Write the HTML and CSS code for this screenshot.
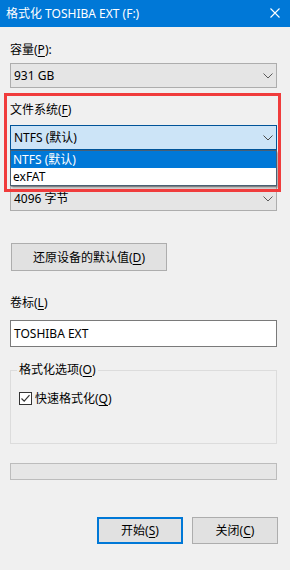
FILE: index.html
```html
<!DOCTYPE html>
<html lang="zh-CN">
<head>
<meta charset="utf-8">
<title>格式化 TOSHIBA EXT (F:)</title>
<link rel="stylesheet" href="styles.css">
</head>
<body>
<div class="window">
  <div class="titlebar">
    <span class="title">格式化 TOSHIBA EXT (F:)</span>
    <svg class="close" width="10" height="10" viewBox="0 0 10 10"><path d="M0.5 0.5 L9.5 9.5 M9.5 0.5 L0.5 9.5" stroke="#fff" stroke-width="1.1" fill="none"/></svg>
  </div>
  <div class="content">
    <div class="label l1">容量(<u>P</u>):</div>
    <div class="combo c1"><span>931 GB</span><svg class="chev" width="10" height="6" viewBox="0 0 10 6"><path d="M0.5 0.5 L5 5 L9.5 0.5" stroke="#5a5a5a" stroke-width="1" fill="none"/></svg></div>

    <div class="label l2">文件系统(<u>F</u>)</div>
    <div class="combo-wrap">
      <div class="combo c2 focused"><span>NTFS (默认)</span><svg class="chev" width="10" height="6" viewBox="0 0 10 6"><path d="M0.5 0.5 L5 5 L9.5 0.5" stroke="#4a4a4a" stroke-width="1" fill="none"/></svg></div>
      <ul class="droplist">
        <li class="sel">NTFS (默认)</li>
        <li>exFAT</li>
      </ul>
    </div>

    <div class="label l3"></div>
    <div class="combo c3"><span>4096 字节</span><svg class="chev" width="10" height="6" viewBox="0 0 10 6"><path d="M0.5 0.5 L5 5 L9.5 0.5" stroke="#5a5a5a" stroke-width="1" fill="none"/></svg></div>

    <div class="btn restore">还原设备的默认值(<u>D</u>)</div>

    <div class="label l4">卷标(<u>L</u>)</div>
    <div class="textbox">TOSHIBA EXT</div>

    <fieldset class="group">
      <legend>格式化选项(<u>O</u>)</legend>
      <div class="check-row">
        <span class="checkbox"><svg width="11" height="11" viewBox="0 0 11 11"><path d="M1.5 5.5 L4.2 8.2 L9.5 2.2" stroke="#333" stroke-width="1.2" fill="none"/></svg></span>
        <span>快速格式化(<u>Q</u>)</span>
      </div>
    </fieldset>

    <div class="progress"></div>

    <div class="actions">
      <div class="btn primary">开始(<u>S</u>)</div>
      <div class="btn">关闭(<u>C</u>)</div>
    </div>
  </div>
  <div class="highlight"></div>
</div>
</body>
</html>
```

FILE: styles.css
```css
* { box-sizing: border-box; }
html, body {
  margin: 0;
  padding: 0;
  background: #f0f0f0;
}
body {
  font-family: "Noto Sans", "Noto Sans CJK SC", sans-serif;
  font-size: 12px;
  color: #000;
}
u { text-decoration: underline; text-underline-offset: 2px; }
.window {
  position: relative;
  width: 290px;
  height: 570px;
  overflow: hidden;
}
.titlebar {
  height: 27px;
  background: #0078d7;
  color: #fff;
  display: flex;
  align-items: center;
  justify-content: space-between;
  padding: 0 10px 0 6px;
}
.title { line-height: 17px; }
.close { display: block; margin-top: -1px; }

.content {
  padding: 0 13px 0 10px;
  display: flex;
  flex-direction: column;
}
.label { line-height: 17px; height: 17px; }
.l1 { margin-top: 14px; }
.l2 { margin-top: 13px; }
.l3 { margin-top: 13px; }
.l4 { margin-top: 23px; }

.combo {
  height: 25px;
  background: #e5e5e5;
  border: 1px solid #adadad;
  display: flex;
  align-items: center;
  justify-content: space-between;
  padding: 0 3px 0 3px;
  line-height: 17px;
}
.combo .chev { display: block; margin-top: 1px; }
.c1 { margin-top: 5px; }
.combo-wrap { position: relative; margin-top: 7px; }
.c3 { margin-top: 6px; }
.focused {
  background: #cce4f7;
  border-color: #005499;
}
.droplist {
  position: absolute;
  left: 0;
  right: 0;
  top: 25px;
  margin: 0;
  padding: 0;
  list-style: none;
  background: #fff;
  border: 1px solid #4a5f73;
  box-shadow: 2px 2px 2px rgba(0, 0, 0, 0.28);
  z-index: 2;
}
.droplist li {
  height: 17px;
  line-height: 17px;
  padding-left: 2px;
}
.droplist li.sel {
  background: #0078d7;
  color: #fff;
}

.btn {
  height: 27px;
  width: 86px;
  background: #e1e1e1;
  border: 1px solid #adadad;
  display: flex;
  align-items: center;
  justify-content: center;
  line-height: 17px;
}
.restore {
  margin-top: 32px;
  margin-left: 1px;
  width: 156px;
  height: 28px;
}
.textbox {
  margin-top: 9px;
  height: 27px;
  background: #fff;
  border: 1px solid #7a7a7a;
  padding-left: 3px;
  display: flex;
  align-items: center;
  line-height: 17px;
}

.group {
  margin: 15px 0 0 0;
  padding: 0 0 36px 6px;
  border: 1px solid #dcdcdc;
  min-width: 0;
}
.group legend {
  padding: 0 2px;
  line-height: 16px;
}
.check-row {
  margin-top: 12px;
  margin-left: 2px;
  display: flex;
  align-items: center;
  line-height: 17px;
  height: 17px;
}
.checkbox {
  width: 13px;
  height: 13px;
  border: 1px solid #333;
  background: #fff;
  display: flex;
  align-items: center;
  justify-content: center;
  margin-right: 3px;
}
.checkbox svg { display: block; }

.progress {
  margin-top: 19px;
  height: 17px;
  background: #e6e6e6;
  border: 1px solid #bcbcbc;
}
.actions {
  margin-top: 37px;
  margin-right: -1px;
  display: flex;
  justify-content: flex-end;
  gap: 9px;
}
.primary {
  border: 2px solid #0078d7;
}

.highlight {
  position: absolute;
  left: 4px;
  top: 93px;
  width: 277px;
  height: 99px;
  border: 3px solid #f03c3c;
  pointer-events: none;
  z-index: 3;
}
```
